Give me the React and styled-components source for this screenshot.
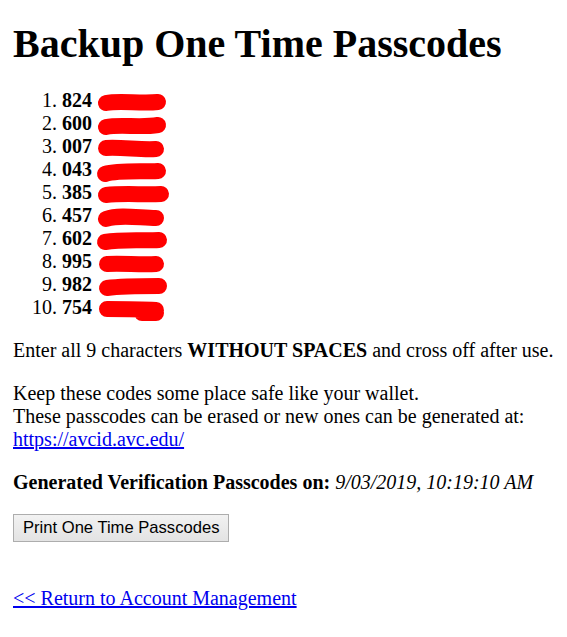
import React from "react";
import styled, { createGlobalStyle } from "styled-components";

const Global = createGlobalStyle`
  html, body { background: #fff; }
  body {
    margin: 0;
    padding: 0 13px;
    font-family: "Liberation Serif", "Times New Roman", serif;
    font-size: 20px;
    color: #000;
  }
`;

const Page = styled.div`
  display: flow-root;
`;

const Title = styled.h1`
  font-size: 40px;
  font-weight: bold;
  margin: 20px 0 22px;
`;

const CodeList = styled.ol`
  margin: 0 0 20px;
  padding-left: 49px;
`;

const Code = styled.li`
  white-space: nowrap;
`;

const Digits = styled.b`
  font-weight: bold;
`;

const Scribble = styled.svg`
  display: inline-block;
  vertical-align: -5px;
  margin-left: 1px;
  overflow: visible;
`;

const Para = styled.p`
  margin: 20px 0;
`;

const Link = styled.a`
  color: #0000ee;
  text-decoration: underline;
`;

const Italic = styled.i`
  font-style: italic;
`;

const PrintButton = styled.button`
  font-family: Arial, "Liberation Sans", sans-serif;
  font-size: 16.6px;
  color: #000;
  height: 28px;
  padding: 0 9px;
  border: 1px solid #adadad;
  border-radius: 0;
  background: linear-gradient(#f2f2f2, #e3e3e3);
  cursor: pointer;
`;

const Footer = styled.p`
  margin: 45px 0 20px;
`;

const codes = [
  { n: "824", w: 70, d: "M8 9 C 22 6, 42 10, 60 8" },
  { n: "600", w: 70, d: "M8 10 C 22 7, 42 11, 60 8" },
  { n: "007", w: 68, d: "M8 8 C 24 7, 42 10, 58 9" },
  { n: "043", w: 70, d: "M7 11 C 20 7, 44 9, 60 8" },
  { n: "385", w: 74, d: "M8 9 C 26 7, 46 9, 63 8" },
  { n: "457", w: 68, d: "M8 10 C 22 5, 42 9, 58 9" },
  { n: "602", w: 72, d: "M7 10 C 24 7, 46 9, 61 8" },
  { n: "995", w: 68, d: "M9 9 C 24 8, 42 10, 58 9" },
  { n: "982", w: 72, d: "M9 10 C 24 8, 46 8, 61 8" },
  { n: "754", w: 68, d: "M9 8 C 24 8, 42 8, 58 9 M 44 12 L 58 12" },
];

function Redaction({ w, d }) {
  return (
    <Scribble width={w} height="18" viewBox={`0 0 ${w} 18`} aria-hidden="true">
      <path d={d} fill="none" stroke="#ff0000" strokeWidth="16" strokeLinecap="round" strokeLinejoin="round" />
    </Scribble>
  );
}

export default function App() {
  return (
    <Page>
      <Global />
      <Title>Backup One Time Passcodes</Title>
      <CodeList>
        {codes.map((c) => (
          <Code key={c.n}>
            <Digits>{c.n}</Digits> <Redaction w={c.w} d={c.d} />
          </Code>
        ))}
      </CodeList>
      <Para>
        Enter all 9 characters <b>WITHOUT SPACES</b> and cross off after use.
      </Para>
      <Para>
        Keep these codes some place safe like your wallet.
        <br />
        These passcodes can be erased or new ones can be generated at:
        <br />
        <Link href="#">https://avcid.avc.edu/</Link>
      </Para>
      <Para>
        <b>Generated Verification Passcodes on:</b> <Italic>9/03/2019, 10:19:10 AM</Italic>
      </Para>
      <PrintButton type="button">Print One Time Passcodes</PrintButton>
      <Footer>
        <Link href="#">&lt;&lt; Return to Account Management</Link>
      </Footer>
    </Page>
  );
}
